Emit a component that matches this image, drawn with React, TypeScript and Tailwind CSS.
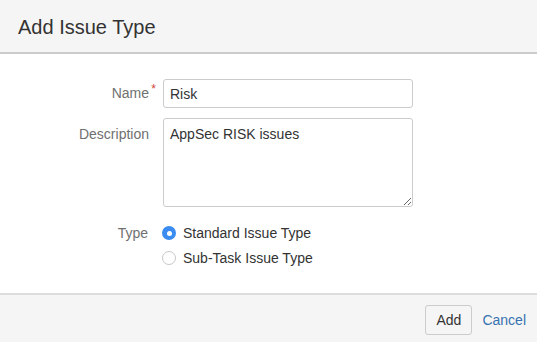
import React, { useState } from 'react';

export default function App() {
    const [name, setName] = useState('Risk');
    const [description, setDescription] = useState('AppSec RISK issues');
    const [type, setType] = useState<'standard' | 'subtask'>('standard');

    return (
        <div className="w-[537px] h-[342px] flex flex-col bg-white text-[#333] font-['Liberation_Sans',Arial,sans-serif] text-[14px]">
            <div className="h-[54px] shrink-0 bg-[#f5f5f5] border-b-2 border-[#ccc] flex items-center px-[18px]">
                <h2 className="text-[20px] leading-6 text-[#333] pt-[2px]">Add Issue Type</h2>
            </div>

            <form className="flex-1 pt-[25px]" onSubmit={(e) => e.preventDefault()}>
                <div className="flex items-center">
                    <label className="w-[163px] text-right text-[#707070] pr-[14px] relative">
                        Name
                        <span className="absolute right-[7px] top-[-3px] text-[#d04437] text-[12px]">*</span>
                    </label>
                    <input
                        value={name}
                        onChange={(e) => setName(e.target.value)}
                        className="w-[250px] h-[29px] border border-[#ccc] rounded-[3px] px-[6px] text-[14px] text-[#333] outline-none"
                    />
                </div>

                <div className="flex items-start mt-[10px]">
                    <label className="w-[163px] text-right text-[#707070] pr-[14px] pt-[6px]">Description</label>
                    <textarea
                        value={description}
                        onChange={(e) => setDescription(e.target.value)}
                        className="w-[250px] h-[89px] border border-[#ccc] rounded-[3px] px-[6px] py-[5px] text-[14px] text-[#333] outline-none resize-y"
                    />
                </div>

                <div className="flex items-start mt-[16px]">
                    <label className="w-[163px] text-right text-[#707070] pr-[15px] leading-5">Type</label>
                    <div className="flex flex-col gap-[5px] -ml-[1px]">
                        <label className="flex items-center gap-[7px] leading-5 cursor-pointer" onClick={() => setType('standard')}>
                            <span
                                className={
                                    type === 'standard'
                                        ? 'w-[14px] h-[14px] rounded-full bg-[#3b8cf0] flex items-center justify-center'
                                        : 'w-[14px] h-[14px] rounded-full border border-[#c8c8c8] bg-white'
                                }
                            >
                                {type === 'standard' && <span className="w-[5px] h-[5px] rounded-full bg-white" />}
                            </span>
                            Standard Issue Type
                        </label>
                        <label className="flex items-center gap-[7px] leading-5 cursor-pointer" onClick={() => setType('subtask')}>
                            <span
                                className={
                                    type === 'subtask'
                                        ? 'w-[14px] h-[14px] rounded-full bg-[#3b8cf0] flex items-center justify-center'
                                        : 'w-[14px] h-[14px] rounded-full border border-[#c8c8c8] bg-white'
                                }
                            >
                                {type === 'subtask' && <span className="w-[5px] h-[5px] rounded-full bg-white" />}
                            </span>
                            Sub-Task Issue Type
                        </label>
                    </div>
                </div>
            </form>

            <div className="h-[49px] shrink-0 bg-[#f5f5f5] border-t-2 border-[#ddd] flex items-center justify-end pr-[11px] gap-[10px]">
                <button className="h-[30px] px-[10px] mt-[3px] border border-[#ccc] rounded-[3px] bg-[#f5f5f5] text-[#333] text-[14px]">
                    Add
                </button>
                <a href="#" className="text-[#3572b0] text-[14px] mt-[3px]">Cancel</a>
            </div>
        </div>
    );
}
